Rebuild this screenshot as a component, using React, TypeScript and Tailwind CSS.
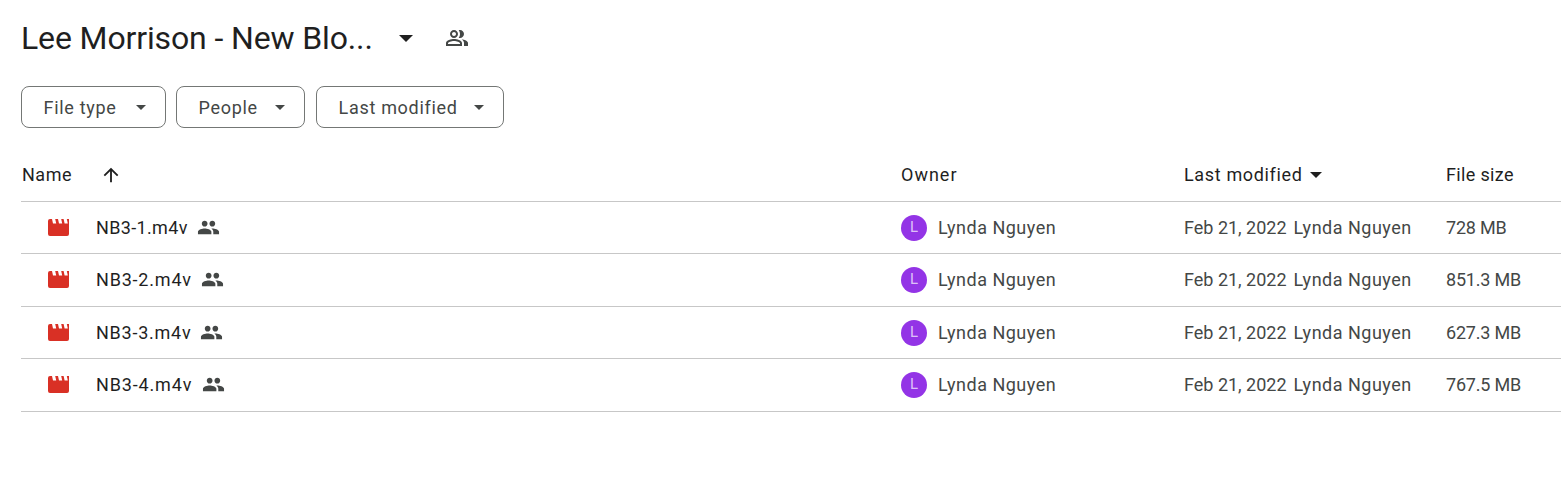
import React from "react";

const rows = [
  { name: "NB3-1.m4v", size: "728 MB", height: "h-[52px]", nameClass: "w-[92px] tracking-[0.35px]" },
  { name: "NB3-2.m4v", size: "851.3 MB", height: "h-[53px] pb-[1px]", nameClass: "w-[96px] tracking-[0.8px]" },
  { name: "NB3-3.m4v", size: "627.3 MB", height: "h-[52px]", nameClass: "w-[95px] tracking-[0.75px]" },
  { name: "NB3-4.m4v", size: "767.5 MB", height: "h-[53px] pb-[1px]", nameClass: "w-[97px] tracking-[0.85px]" },
];

const Caret = ({ className }: { className: string }) => (
  <svg viewBox="0 0 10 5" className={className} fill="currentColor">
    <path d="M0 0l5 5 5-5z" />
  </svg>
);

const SharedIcon = () => (
  <svg viewBox="0 0 24 24" className="w-[23px] h-[23px] text-[#444746]" fill="currentColor">
    <path d="M16 11c1.66 0 2.99-1.34 2.99-3S17.66 5 16 5c-1.66 0-3 1.34-3 3s1.34 3 3 3zm-8 0c1.66 0 2.99-1.34 2.99-3S9.66 5 8 5C6.34 5 5 6.34 5 8s1.34 3 3 3zm0 2c-2.33 0-7 1.17-7 3.5V19h14v-2.5c0-2.33-4.67-3.5-7-3.5zm8 0c-.29 0-.62.02-.97.05 1.16.84 1.97 1.97 1.97 3.45V19h6v-2.5c0-2.33-4.67-3.5-7-3.5z" />
  </svg>
);

const MovieIcon = () => (
  <svg viewBox="0 0 21 17" className="w-[21px] h-[17px] text-[#d93025]" fill="currentColor">
    <path d="M2 0H4L5 4.5H8.2L7.2 0H10L11 4.5H14.2L13.2 0H15.6L16.6 4.5H19.8L18.8 0H21V15a2 2 0 0 1-2 2H2a2 2 0 0 1-2-2V2a2 2 0 0 1 2-2z" />
  </svg>
);

const FilterChip = ({ label, width }: { label: string; width: string }) => (
  <button
    className={`${width} h-[42px] flex items-center justify-between pl-[21.5px] pr-[19px] rounded-lg border border-[#747775] text-[#444746] text-[18px] tracking-[0.7px]`}
  >
    <span>{label}</span>
    <Caret className="w-[10px] h-[5px]" />
  </button>
);

export default function App() {
  return (
    <div className="w-[1561px] h-[501px] bg-white overflow-hidden pl-[21px] font-['Roboto',sans-serif]">
      {/* Title */}
      <div className="h-[86px] flex items-center pb-[10px]">
        <h1 className="text-[32px] text-[#1f1f1f] w-[378px] whitespace-nowrap tracking-[-0.13px]">Lee Morrison - New Blo...</h1>
        <Caret className="w-[14px] h-[7px] text-[#1f1f1f]" />
        <svg viewBox="0 0 24 24" className="ml-[32px] w-[24px] h-[24px] text-[#444746]" fill="currentColor">
          <path d="M16.67 13.13C18.04 14.06 19 15.32 19 17v3h4v-3c0-2.18-3.57-3.47-6.33-3.87zM15 12c2.21 0 4-1.79 4-4s-1.79-4-4-4c-.47 0-.91.1-1.33.24C14.5 5.27 15 6.58 15 8s-.5 2.73-1.33 3.76c.42.14.86.24 1.33.24zM9 12c2.21 0 4-1.79 4-4s-1.79-4-4-4-4 1.79-4 4 1.79 4 4 4zm0-6c1.1 0 2 .9 2 2s-.9 2-2 2-2-.9-2-2 .9-2 2-2zM9 13c-2.67 0-8 1.34-8 4v3h16v-3c0-2.66-5.33-4-8-4zm6 5H3v-.99C3.2 16.29 6.3 15 9 15s5.8 1.29 6 2z" />
        </svg>
      </div>

      {/* Filters */}
      <div className="flex gap-[10px]">
        <FilterChip label="File type" width="w-[145px]" />
        <FilterChip label="People" width="w-[129px]" />
        <FilterChip label="Last modified" width="w-[188px] ml-[1px]" />
      </div>

      {/* Header */}
      <div className="mt-[20px] h-[54px] grid grid-cols-[880px_283px_262px_1fr] items-center border-b border-[#c7c7c7] text-[18px] text-[#1f1f1f]">
        <div className="flex items-center pl-[1px]">
          <span className="w-[78px] tracking-[0.5px]">Name</span>
          <svg viewBox="0 0 24 24" className="w-[22px] h-[22px] text-[#1f1f1f]" fill="currentColor">
            <path d="M4 12l1.41 1.41L11 7.83V20h2V7.83l5.58 5.59L20 12l-8-8-8 8z" />
          </svg>
        </div>
        <div className="tracking-[1px]">Owner</div>
        <div className="flex items-center gap-[7px]">
          <span className="tracking-[0.65px]">Last modified</span>
          <Caret className="w-[12px] h-[6px]" />
        </div>
        <div className="tracking-[0.35px]">File size</div>
      </div>

      {/* Rows */}
      {rows.map((row) => (
        <div
          key={row.name}
          className={`${row.height} grid grid-cols-[880px_283px_262px_1fr] items-center border-b border-[#c7c7c7] text-[18px] text-[#444746]`}
        >
          <div className="flex items-center pl-[27px]">
            <MovieIcon />
            <span className={`${row.nameClass} ml-[27px] text-[#1f1f1f] whitespace-nowrap`}>{row.name}</span>
            <span className="ml-[9px] flex"><SharedIcon /></span>
          </div>
          <div className="flex items-center gap-[11px]">
            <span className="w-[26px] h-[26px] rounded-full bg-[#9334e6] text-white/70 text-[15px] flex items-center justify-center">L</span>
            <span className="tracking-[0.5px]">Lynda Nguyen</span>
          </div>
          <div className="flex items-center gap-[7px] whitespace-nowrap">
            <span>Feb 21, 2022</span>
            <span className="tracking-[0.5px]">Lynda Nguyen</span>
          </div>
          <div className="tracking-[-0.2px]">{row.size}</div>
        </div>
      ))}
    </div>
  );
}
